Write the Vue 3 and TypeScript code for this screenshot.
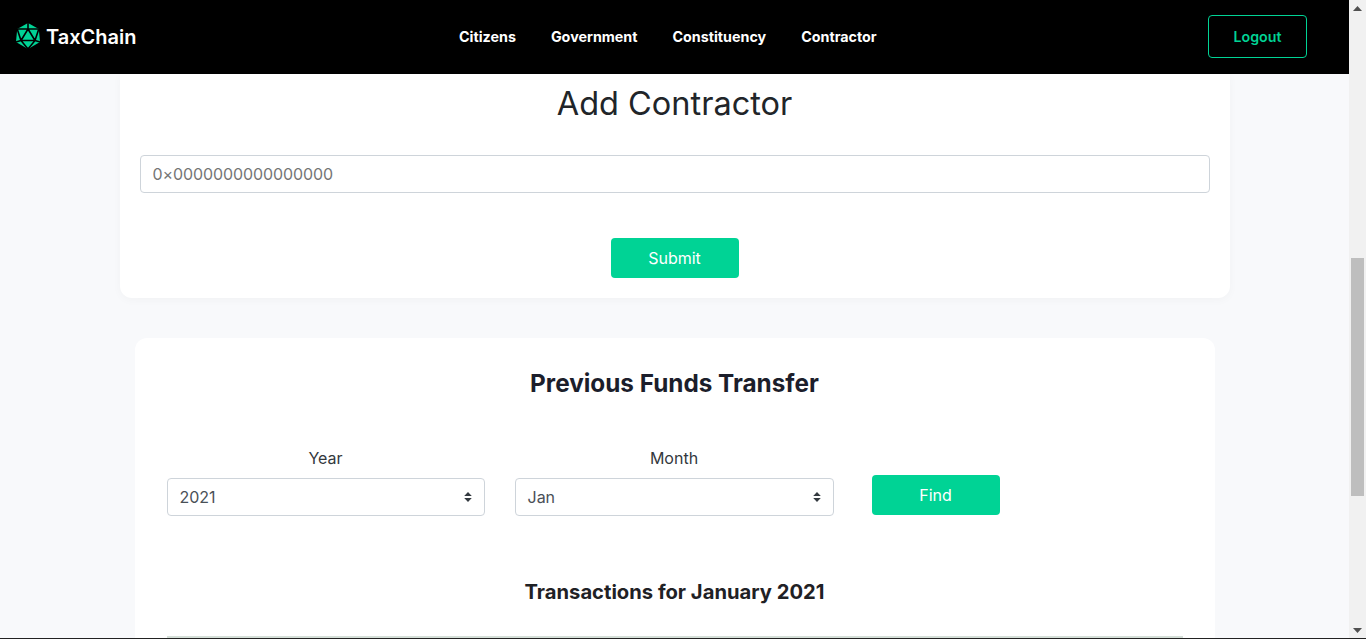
<script setup lang="ts">
const links: string[] = ['Citizens', 'Government', 'Constituency', 'Contractor']
</script>

<template>
  <div class="window">
    <div class="page">
      <header class="nav">
        <div class="brand">
          <svg class="logo" viewBox="0 0 26 26" width="26" height="26">
            <path d="M13 0 L23.8 6 L25 19 L13 26 L1 19 L2.2 6 Z" fill="#00d395" />
            <path d="M13 6 L20 17.5 L6 17.5 Z M13 0 L13 6 M2.2 6 L13 6 L23.8 6 M2.2 6 L6 17.5 L1 19 M23.8 6 L20 17.5 L25 19 M6 17.5 L13 26 L20 17.5" fill="none" stroke="#000" stroke-width="1.6" />
          </svg>
          <span class="brand-name">TaxChain</span>
        </div>
        <nav class="links">
          <a v-for="l in links" :key="l">{{ l }}</a>
        </nav>
        <button class="logout">Logout</button>
      </header>
      <main class="content">
        <section class="card-add">
          <h1>Add Contractor</h1>
          <input class="field" type="text" placeholder="0×0000000000000000" />
          <button class="primary submit">Submit</button>
        </section>
        <section class="card-funds">
          <h2>Previous Funds Transfer</h2>
          <div class="filters">
            <label class="col">
              <span>Year</span>
              <div class="select">2021<svg viewBox="0 0 8 12" width="8" height="12"><path d="M4 1 L7.8 5 H0.2 Z M4 11 L0.2 7 H7.8 Z" fill="#343a40" /></svg></div>
            </label>
            <label class="col">
              <span>Month</span>
              <div class="select">Jan<svg viewBox="0 0 8 12" width="8" height="12"><path d="M4 1 L7.8 5 H0.2 Z M4 11 L0.2 7 H7.8 Z" fill="#343a40" /></svg></div>
            </label>
            <button class="primary find">Find</button>
          </div>
          <h3>Transactions for January 2021</h3>
          <div class="table-top"></div>
        </section>
      </main>
    </div>
    <aside class="scrollbar">
      <svg viewBox="0 0 17 17" width="17" height="17"><path d="M8.5 6 L13 11 H4 Z" fill="#505050" /></svg>
      <div class="track"><div class="thumb"></div></div>
      <svg viewBox="0 0 17 17" width="17" height="17"><path d="M8.5 11 L4 6 H13 Z" fill="#505050" /></svg>
    </aside>
    <div class="edge"></div>
  </div>
</template>

<style>
html, body { margin: 0; overflow: hidden; }
</style>

<style scoped>
.window {
  position: relative;
  display: flex;
  width: 1366px;
  height: 639px;
  overflow: hidden;
  font-family: Inter, "Liberation Sans", sans-serif;
}
.page {
  width: 1349px;
  height: 639px;
  background: #f8f9fb;
  overflow: hidden;
}
.nav {
  height: 74px;
  box-sizing: border-box;
  background: #000;
  display: flex;
  align-items: center;
  padding: 0 42px 2px 15px;
}
.brand {
  display: flex;
  align-items: center;
  gap: 5px;
  width: 425px;
  color: #fff;
  font-size: 20px;
  font-weight: 600;
}
.brand-name {
  padding-top: 1px;
}
.links {
  display: flex;
  gap: 35px;
  margin-left: 19px;
  flex: 1;
}
.links a {
  color: #fff;
  font-size: 14.3px;
  font-weight: 700;
}
.logout {
  width: 99px;
  height: 43px;
  background: transparent;
  border: 1px solid #00d395;
  border-radius: 4px;
  color: #00d395;
  font: 600 14.2px Inter, sans-serif;
}
.content {
  display: flex;
  flex-direction: column;
  align-items: center;
}
.card-add {
  width: 1110px;
  height: 224px;
  box-sizing: border-box;
  background: #fff;
  border-radius: 0 0 12px 12px;
  box-shadow: 0 2px 10px rgba(0, 0, 0, 0.03);
  padding: 0 20px;
  display: flex;
  flex-direction: column;
  align-items: center;
}
h1 {
  margin: 11px 0 0;
  font-size: 32.5px;
  line-height: 38px;
  font-weight: 400;
  color: #212529;
}
.field {
  box-sizing: border-box;
  width: 1070px;
  height: 38px;
  margin-top: 32px;
  padding: 0 12px;
  border: 1px solid #ced4da;
  border-radius: 4px;
  font: 400 16px Inter, sans-serif;
  letter-spacing: -0.1px;
  outline: none;
}
.field::placeholder {
  color: #757575;
  opacity: 1;
}
.primary {
  width: 128px;
  height: 40px;
  background: #00d395;
  border: none;
  border-radius: 4px;
  color: #fff;
  font: 400 16px Inter, sans-serif;
}
.submit {
  margin-top: 45px;
}
.card-funds {
  width: 1080px;
  height: 320px;
  box-sizing: border-box;
  margin-top: 40px;
  background: #fff;
  border-radius: 12px 12px 0 0;
  padding: 31px 32px 0;
}
h2 {
  margin: 0;
  text-align: center;
  font-size: 24.3px;
  line-height: 29px;
  font-weight: 700;
  color: #1c1e2b;
}
.filters {
  display: flex;
  align-items: flex-end;
  margin-top: 51px;
}
.col {
  display: flex;
  flex-direction: column;
  align-items: center;
  gap: 10px;
  font-size: 16px;
  line-height: 19px;
  color: #33383d;
}
.col:nth-child(1) { width: 318px; }
.col:nth-child(2) { width: 319px; margin-left: 30px; }
.select {
  box-sizing: border-box;
  width: 100%;
  height: 38px;
  padding: 0 12px;
  border: 1px solid #ced4da;
  border-radius: 4px;
  background: #fff;
  display: flex;
  align-items: center;
  justify-content: space-between;
  font-size: 16px;
  color: #495057;
}
.find {
  margin-left: 38px;
  margin-bottom: 1px;
}
h3 {
  margin: 64px 0 0;
  text-align: center;
  font-size: 20.2px;
  line-height: 24px;
  font-weight: 700;
  color: #1f2125;
}
.table-top {
  height: 2px;
  margin-top: 32px;
  background: #d5dfd8;
}
.scrollbar {
  width: 17px;
  height: 639px;
  background: #f1f1f1;
  display: flex;
  flex-direction: column;
}
.track {
  flex: 1;
  position: relative;
}
.thumb {
  position: absolute;
  top: 241px;
  left: 2px;
  width: 13px;
  height: 238px;
  background: #bebebe;
}
.edge {
  position: absolute;
  left: 0;
  right: 0;
  bottom: 0;
  height: 1px;
  background: #222;
}
</style>
